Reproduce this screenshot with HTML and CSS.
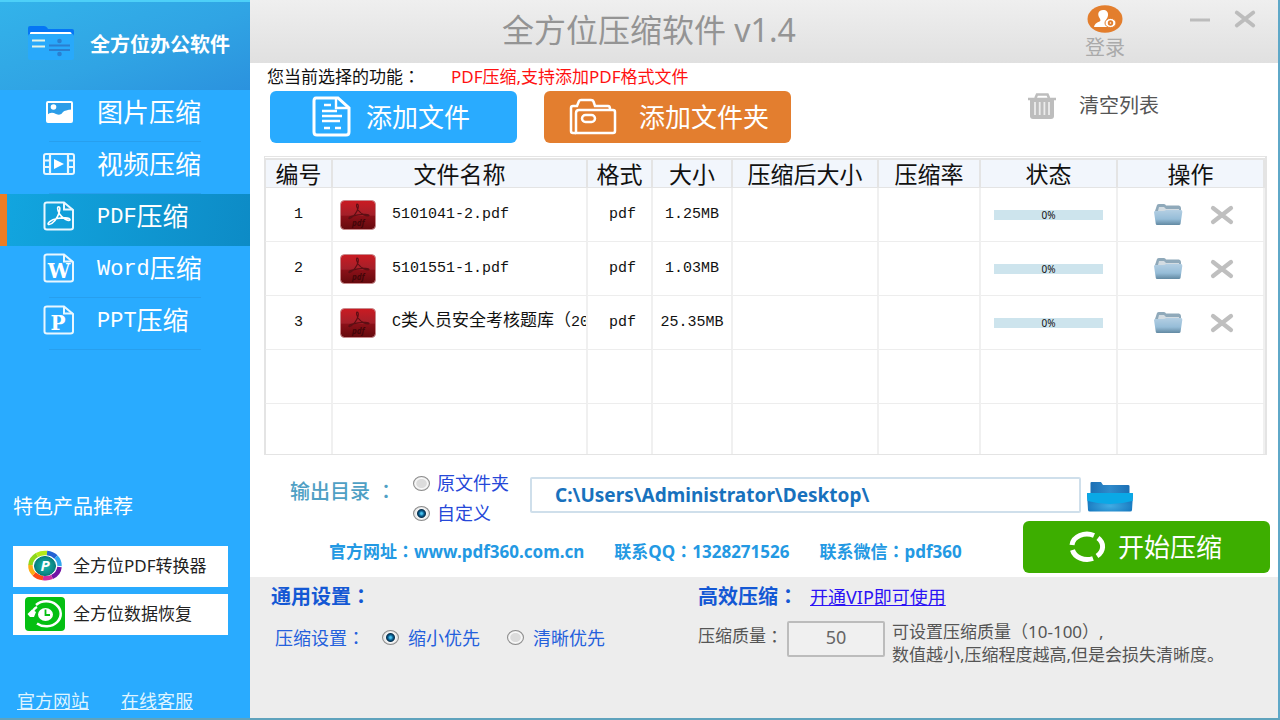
FILE: index.html
```html
<!DOCTYPE html>
<html lang="zh-CN">
<head>
<meta charset="utf-8">
<title>全方位压缩软件 v1.4</title>
<link rel="stylesheet" href="styles.css">
</head>
<body>
<svg class="sprite" aria-hidden="true">
  <defs>
    <linearGradient id="redFill" x1="0" y1="0" x2="0" y2="1">
      <stop offset="0" stop-color="#cb1b22"/><stop offset=".5" stop-color="#a3202a"/><stop offset=".55" stop-color="#8a1018"/><stop offset="1" stop-color="#650a0e"/>
    </linearGradient>
    <linearGradient id="folderFill" x1="0" y1="0" x2="0" y2="1">
      <stop offset="0" stop-color="#b4cfe3"/><stop offset=".6" stop-color="#96bdd8"/><stop offset="1" stop-color="#6289a2"/>
    </linearGradient>
    <linearGradient id="backFill" x1="0" y1="0" x2="1" y2="0">
      <stop offset="0" stop-color="#1c6fb4"/><stop offset=".5" stop-color="#2f8acb"/><stop offset="1" stop-color="#1c6fb4"/>
    </linearGradient>
    <radialGradient id="frontFill" cx=".5" cy=".7" r=".6">
      <stop offset="0" stop-color="#41ade4"/><stop offset="1" stop-color="#1272bb"/>
    </radialGradient>
    <radialGradient id="tealFill"><stop offset="0" stop-color="#19b8ae"/><stop offset="1" stop-color="#08807e"/></radialGradient>
  </defs>
  <symbol id="page" viewBox="0 0 32 30">
    <path d="M4 1.5H21L30 9V26.5Q30 28.5 27.500 28.500H4Q1.500 28.500 1.500 26.500V3.500Q1.500 1.500 4 1.500Z" fill="none" stroke="#e9f7ff" stroke-width="2"/>
    <path d="M21 2V8.500H29.500" fill="none" stroke="#e9f7ff" stroke-width="2"/>
  </symbol>
  <symbol id="acrobat" viewBox="0 0 24 20">
    <path d="M11 1C13.500 0 13 4 12 7C10.500 12 6 18 2 18.500C-1 18 4 13.500 10 12.500C15 11.500 23 11.500 23 13.800C22 16 15 12 12.500 8C11 5 10 2 11 1Z" fill="none" stroke="currentColor" stroke-width="1.600"/>
  </symbol>
  <symbol id="pdfFile" viewBox="0 0 36 30">
    <rect x=".5" y=".5" width="35" height="29" rx="4" fill="url(#redFill)" stroke="#c98a8d"/>
    <path d="M17 4C19 4 18.500 8 17 11C15 15 11 19 9 18.500C8 17 13 15.500 18 14.800C23 14 29 14 29 15.500C27 17 21 14 18.500 10.500C17 8 16 5 17 4Z" fill="none" stroke="#5d0f14" stroke-width="1.200"/>
  </symbol>
  <symbol id="folder" viewBox="0 0 30 23">
    <path d="M2 8L4 2Q4.500 1 6 1H11Q12.500 1 13 2.500H26Q28 3 28 5V9H2Z" fill="#8fa9ba"/>
    <path d="M5 8L6 4H11L13 6H26V9H5Z" fill="#d3dce2"/>
    <path d="M1 9Q1 8 2.500 8H10Q12 8 13 7H28Q29.500 7 29.300 9L27.500 21Q27.300 22 26 22H4Q3 22 2.800 21Z" fill="url(#folderFill)"/>
  </symbol>
  <symbol id="cross" viewBox="0 0 24 20">
    <path d="M3 3L21 17M21 3L3 17" stroke="currentColor" stroke-width="4.200" stroke-linecap="round"/>
  </symbol>
</svg>

<div class="window">
  <aside class="sidebar">
    <header class="brand">
      <svg width="46" height="36" viewBox="0 0 46 36" aria-hidden="true">
        <path d="M0 3Q0 1 2 1H16Q18 1 19 2.500L20 4H44Q46 4 46 6V14H0Z" fill="#0576f5"/>
        <path d="M2 8Q2 7 3.500 7H42Q43.500 7 43.500 8.500V14H2Z" fill="#fff"/>
        <rect y="9" width="46" height="26" rx="2" fill="#28a9fb"/>
        <path d="M4 15.500H17M4 21.500H17" stroke="#e3f3e6" stroke-width="2"/>
        <path d="M21 20.500H42M21 25H42" stroke="#2a7fd0" stroke-width="2"/>
        <circle cx="31.500" cy="16" r="2.300" fill="#2a7fd0"/><circle cx="31.500" cy="29" r="2.300" fill="#2a7fd0"/>
      </svg>
      <strong>全方位办公软件</strong>
    </header>
    <nav class="menu">
      <button type="button"><span class="ico"><svg width="27" height="22" viewBox="0 0 27 22"><rect x="1" y="1" width="25" height="20" rx="1" fill="#2b9de8" stroke="#fff" stroke-width="2"/><circle cx="7.500" cy="6" r="2.800" fill="#fff"/><path d="M1 14Q5 10 10 13Q15 15 17 11Q19 9 26 8.500V21H1Z" fill="#fff"/></svg></span>图片压缩</button>
      <button type="button"><span class="ico"><svg width="32" height="22" viewBox="0 0 32 22"><rect x="1" y="1" width="30" height="20" rx="2" fill="none" stroke="#e9f7ff" stroke-width="2"/><path d="M7 1V21M25 1V21M1 7.500H7M1 14H7M25 7.500H31M25 14H31" stroke="#e9f7ff" stroke-width="2.200"/><path d="M11 6V16L21 11Z" fill="#fff"/></svg></span>视频压缩</button>
      <button type="button" class="active" aria-current="page"><span class="ico"><svg width="32" height="30" viewBox="0 0 32 30"><use href="#page"/><use href="#acrobat" x="4" y="5" width="24" height="20"/></svg></span><span class="latin">PDF</span>压缩</button>
      <button type="button"><span class="ico"><svg width="32" height="30" viewBox="0 0 32 30"><use href="#page"/><text x="16" y="25" class="letter">W</text></svg></span><span class="latin">Word</span>压缩</button>
      <button type="button"><span class="ico"><svg width="32" height="30" viewBox="0 0 32 30"><use href="#page"/><text x="15" y="25" class="letter">P</text></svg></span><span class="latin">PPT</span>压缩</button>
    </nav>
    <section class="promo">
      <h2>特色产品推荐</h2>
      <button type="button">
        <svg width="40" height="34" viewBox="0 0 40 34" aria-hidden="true">
          <g fill="none" stroke-width="4.500">
            <path d="M5.500 16A14.500 12.500 0 0 1 12 6" stroke="#8fd81c"/>
            <path d="M12 6A14.500 12.500 0 0 1 22 4" stroke="#b5ea18"/>
            <path d="M22 4A14.500 12.500 0 0 1 31 8" stroke="#2462d4"/>
            <path d="M31 8A14.500 12.500 0 0 1 34.500 17" stroke="#30a5ed"/>
            <path d="M34.500 18A14.500 12.500 0 0 1 27 28" stroke="#7115a5"/>
            <path d="M27 28A14.500 12.500 0 0 1 18 29" stroke="#d12fa0"/>
            <path d="M18 29A14.500 12.500 0 0 1 9 25" stroke="#ff4b15"/>
            <path d="M9 25A14.500 12.500 0 0 1 5.500 16" stroke="#ffac14"/>
          </g>
          <ellipse cx="20" cy="17" rx="10.500" ry="9.500" fill="url(#tealFill)" stroke="#077" />
          <text x="20" y="22" class="badge-letter">P</text>
        </svg>
        全方位PDF转换器
      </button>
      <button type="button">
        <svg width="40" height="34" viewBox="0 0 40 34" aria-hidden="true">
          <rect width="40" height="34" rx="4" fill="#05bf12"/>
          <path d="M11 8A14.500 12.500 0 1 1 12 26.500" fill="none" stroke="#fff" stroke-width="2.500"/>
          <path d="M7 17Q8 12 12 10" fill="none" stroke="#fff" stroke-width="2.500"/>
          <path d="M2.500 17L7 12.500L11 15L9 20H5Z" fill="#fff"/>
          <ellipse cx="20.500" cy="17.500" rx="7.500" ry="6.500" fill="#fff"/>
          <path d="M20.500 12.500V18H25" fill="none" stroke="#05bf12" stroke-width="1.800"/>
        </svg>
        全方位数据恢复
      </button>
    </section>
    <footer class="side-links"><a href="#">官方网站</a><a href="#">在线客服</a></footer>
  </aside>

  <main class="main">
    <header class="titlebar">
      <h1>全方位压缩软件 v1.4</h1>
      <button type="button" class="login">
        <svg width="36" height="28" viewBox="0 0 36 28" aria-hidden="true">
          <ellipse cx="18" cy="14" rx="17.500" ry="13.800" fill="#e37e2d"/>
          <path d="M16 5C19.500 5 21.500 7 21 10.500C20.700 13 19 14 19 15.500C19.500 17 20 17 20 19Q20 21 21.500 22H7Q7.500 18 12.500 16.500C14 16 13.500 14.500 12.500 13C10 9 11.500 5 16 5Z" fill="#fff"/>
          <ellipse cx="23.500" cy="18" rx="5.500" ry="4.600" fill="#fff" stroke="#e37e2d"/>
          <circle cx="23.500" cy="18" r="2.700" fill="#e37e2d"/><circle cx="23.500" cy="18" r=".8" fill="#fff"/>
        </svg>
        登录
      </button>
      <div class="controls">
        <button type="button" aria-label="最小化"><svg width="20" height="16" viewBox="0 0 20 16"><path d="M0 9H20" stroke="#bcbcbc" stroke-width="3"/></svg></button>
        <button type="button" aria-label="关闭"><svg width="22" height="20"><use href="#cross"/></svg></button>
      </div>
    </header>

    <div class="content">
      <p class="current">您当前选择的功能<span class="colon" lang="zh-TW">：</span><span class="hint">PDF压缩,支持添加PDF格式文件</span></p>
      <div class="toolbar">
        <button type="button" class="action add-file">
          <svg width="40" height="42" viewBox="0 0 40 42" aria-hidden="true"><g fill="none" stroke="#fff" stroke-width="2.400"><path d="M4 2H26L37 12V36Q37 39 34 39H5Q2 39 2 36V5Q2 2 4 2Z" stroke-width="3"/><path d="M24 3V12H36M12 9H19M10 15H25M10 20H30M10 25H28M12 32H18M23 32H29"/></g></svg>
          添加文件
        </button>
        <button type="button" class="action add-folder">
          <svg width="48" height="38" viewBox="0 0 48 38" aria-hidden="true"><g fill="none" stroke="#fff" stroke-width="2.500"><path d="M7 35H4Q2 35 2 33V10Q2 8 4 8H8L10 3Q10.500 2 12 2H22Q24 2 24.500 3.500L26 8H39Q41 8 41 11"/><path d="M10 12H44Q46 12 46 14V33Q46 35 44 35H7V15Q7 12 10 12Z"/><rect x="13" y="17" width="13" height="7" rx="3.500"/></g></svg>
          添加文件夹
        </button>
        <button type="button" class="clear">
          <svg width="30" height="26" viewBox="0 0 30 26" aria-hidden="true"><path d="M1 6H29M8.500 5L10 1.500H20.500L22 5" fill="none" stroke="#bdbdbd" stroke-width="2.600"/><path d="M3 6H27V23Q27 26 24 26H6Q3 26 3 23Z" fill="#bdbdbd"/><path d="M8 9V22M12.700 9V22M17.400 9V22M22 9V22" stroke="#ececec" stroke-width="1.800"/></svg>
          清空列表
        </button>
      </div>

      <div class="table-frame">
        <table>
          <colgroup><col class="c-no"><col><col class="c-fmt"><col class="c-size"><col class="c-after"><col class="c-rate"><col class="c-state"><col class="c-op"></colgroup>
          <thead><tr><th>编号</th><th>文件名称</th><th>格式</th><th>大小</th><th>压缩后大小</th><th>压缩率</th><th>状态</th><th>操作</th></tr></thead>
          <tbody>
            <tr><td>1</td><td><div class="file"><svg width="36" height="30"><use href="#pdfFile"/><text x="12" y="26" class="file-tag">pdf</text></svg>5101041-2.pdf</div></td><td class="fmt">pdf</td><td>1.25MB</td><td></td><td></td><td><div class="bar">0%</div></td><td><div class="ops"><button type="button" aria-label="打开"><svg width="30" height="23"><use href="#folder"/></svg></button><button type="button" aria-label="删除"><svg width="26" height="20"><use href="#cross"/></svg></button></div></td></tr>
            <tr><td>2</td><td><div class="file"><svg width="36" height="30"><use href="#pdfFile"/><text x="12" y="26" class="file-tag">pdf</text></svg>5101551-1.pdf</div></td><td class="fmt">pdf</td><td>1.03MB</td><td></td><td></td><td><div class="bar">0%</div></td><td><div class="ops"><button type="button" aria-label="打开"><svg width="30" height="23"><use href="#folder"/></svg></button><button type="button" aria-label="删除"><svg width="26" height="20"><use href="#cross"/></svg></button></div></td></tr>
            <tr><td>3</td><td><div class="file"><svg width="36" height="30"><use href="#pdfFile"/><text x="12" y="26" class="file-tag">pdf</text></svg><span>C<span class="han">类人员安全考核题库（</span>20</span></div></td><td class="fmt">pdf</td><td>25.35MB</td><td></td><td></td><td><div class="bar">0%</div></td><td><div class="ops"><button type="button" aria-label="打开"><svg width="30" height="23"><use href="#folder"/></svg></button><button type="button" aria-label="删除"><svg width="26" height="20"><use href="#cross"/></svg></button></div></td></tr>
            <tr><td></td><td></td><td></td><td></td><td></td><td></td><td></td><td></td></tr>
            <tr class="last"><td></td><td></td><td></td><td></td><td></td><td></td><td></td><td></td></tr>
          </tbody>
        </table>
      </div>

      <div class="output">
        <span class="output-label" id="outLabel">输出目录<span class="colon" lang="zh-TW">：</span></span>
        <div class="choices" role="radiogroup" aria-labelledby="outLabel">
          <label><input type="radio" name="out">原文件夹</label>
          <label><input type="radio" name="out" checked>自定义</label>
        </div>
        <input class="path" type="text" aria-label="输出目录" value="C:\Users\Administrator\Desktop\">
        <button type="button" class="browse" aria-label="浏览">
          <svg width="46" height="30" viewBox="0 0 46 30"><path d="M3.500 1Q3.500 0 4.500 0H14L16 3H41Q42.500 3 42.500 4V13H3.500Z" fill="url(#backFill)"/><path d="M0 11.500Q0 11 1 11H45Q46 11 46 12L45 28Q45 29.500 43 29.500H3Q1 29.500 1 28Z" fill="url(#frontFill)"/><path d="M0 11.500Q0 11 1 11H45Q46 11 46 12L45.500 19Q23 25 .500 19Z" fill="#0aa8e6"/></svg>
        </button>
      </div>
      <div class="start-row">
        <div class="contacts"><span>官方网址<span class="colon" lang="zh-TW">：</span>www.pdf360.com.cn</span><span>联系QQ<span class="colon" lang="zh-TW">：</span>1328271526</span><span>联系微信<span class="colon" lang="zh-TW">：</span>pdf360</span></div>
        <button type="button" class="action start">
          <svg width="38" height="32" viewBox="0 0 38 32" aria-hidden="true"><g fill="none" stroke="#fff" stroke-width="5"><path d="M4 14A15 12 0 0 1 26 4.500"/><path d="M30 7A15 12 0 0 1 29 25"/><path d="M25 27.500A15 12 0 0 1 4.500 19"/></g></svg>
          开始压缩
        </button>
      </div>
    </div>

    <footer class="settings">
      <section class="general">
        <h2>通用设置<span class="colon" lang="zh-TW">：</span></h2>
        <div class="line">
          <span>压缩设置<span class="colon" lang="zh-TW">：</span></span>
          <label><input type="radio" name="mode" checked>缩小优先</label>
          <label><input type="radio" name="mode">清晰优先</label>
        </div>
      </section>
      <section class="vip">
        <h2>高效压缩<span class="colon" lang="zh-TW">：</span><a href="#">开通VIP即可使用</a></h2>
        <div class="quality">
          <label for="q">压缩质量<span class="colon" lang="zh-TW">：</span></label>
          <input id="q" type="text" value="50">
          <p>可设置压缩质量<span class="colon" lang="zh-TW">（</span>10-100<span class="colon" lang="zh-TW">）</span>,<br>数值越小,压缩程度越高,但是会损失清晰度。</p>
        </div>
      </section>
    </footer>
  </main>
</div>
</body>
</html>
```
FILE: styles.css
```css
* { box-sizing: border-box; }
body, h1, h2, p { margin: 0; }
body, button, input {
  font-family: "Noto Sans", "Noto Sans CJK SC", sans-serif;
  font-size: 18px;
  line-height: 20px;
}
button { border: 0; padding: 0; background: none; color: inherit; cursor: pointer; }
svg { display: block; flex: none; }
.sprite { position: absolute; width: 0; height: 0; }
.colon { font-family: "Noto Sans CJK TC", sans-serif; }

.window {
  display: flex;
  min-height: 100vh;
  border-right: 2px solid #5fa8c8;
  border-bottom: 2px solid #5fa3bd;
  background: #fff;
}

/* sidebar */
.sidebar {
  flex: 0 0 250px;
  display: flex;
  flex-direction: column;
  background: #29abff;
  color: #fff;
}
.brand {
  display: flex;
  align-items: center;
  gap: 16px;
  height: 90px;
  padding: 0 0 6px 28px;
  border-top: 2px solid #4dd0f8;
  background: linear-gradient(160deg, #33b3ea, #30a4e4 55%, #2b92de);
}
.brand strong { padding-top: 4px; font-size: 20px; white-space: nowrap; }
.menu button {
  display: flex;
  align-items: center;
  width: 100%;
  height: 52px;
  padding: 0 0 8px 34px;
  border-left: 7px solid transparent;
  background: linear-gradient(#279fee, #279fee) 42px 100% / 152px 1px no-repeat;
  font-size: 26px;
  line-height: 32px;
}
.menu .active { border-left-color: #ec7d23; background: linear-gradient(100deg, #12a5df, #0d8bc6); }
.menu .ico { width: 36px; margin-right: 20px; display: flex; justify-content: center; flex: none; }
.latin { padding-top: 4px; font-family: "Liberation Mono", monospace; font-size: 22px; }
.letter { font: bold 20px "DejaVu Serif", serif; fill: #fff; text-anchor: middle; }
.badge-letter { font: italic bold 15px "Noto Sans", sans-serif; fill: #fff; text-anchor: middle; }
.file-tag { font: italic bold 8px "Noto Sans", sans-serif; fill: #430609; }
.promo { margin-top: auto; padding: 0 22px 0 13px; display: flex; flex-direction: column; gap: 7px; }
.promo h2 { font-size: 20px; font-weight: 400; margin-bottom: 22px; }
.promo button {
  display: flex;
  align-items: center;
  gap: 8px;
  height: 41px;
  padding: 0 0 2px 12px;
  background: #fff;
  color: #222;
  font-size: 17px;
  white-space: nowrap;
}
.side-links { display: flex; gap: 32px; padding: 56px 0 7px 17px; }
.side-links a { color: #dff4ff; }

/* title bar */
.main { flex: 1; min-width: 0; display: flex; flex-direction: column; }
.titlebar {
  display: flex;
  align-items: flex-start;
  height: 63px;
  padding: 0 22px 0 252px;
  background: linear-gradient(#efefef, #e0e0e0);
}
.titlebar h1 { font-size: 32px; line-height: 60px; font-weight: 400; color: #949494; margin-right: auto; white-space: nowrap; }
.login { display: flex; flex-direction: column; align-items: center; gap: 5px; padding-top: 5px; color: #aaa; font-size: 20px; }
.controls { display: flex; align-items: center; gap: 24px; margin-left: 65px; padding-top: 9px; color: #bcbcbc; }

/* file list */
.content { flex: 1; padding: 0 8px 4px 14px; }
.current { padding: 3px 0 4px 3px; font-size: 17px; color: #111; }
.hint { margin-left: 31px; color: #f11; }
.toolbar { display: flex; align-items: center; gap: 27px; padding-left: 6px; }
.action {
  display: flex;
  align-items: center;
  width: 247px;
  height: 52px;
  border-radius: 6px;
  color: #fff;
  font-size: 26px;
  line-height: 32px;
  white-space: nowrap;
}
.add-file { background: #29abff; padding-left: 42px; gap: 14px; }
.add-folder { background: #e37e2f; padding-left: 25px; gap: 22px; }
.clear { display: flex; align-items: center; gap: 22px; margin: 0 111px 22px auto; font-size: 20px; color: #555; }
.table-frame { margin: 13px 3px 0 0; border: 1px solid #e4e4e4; border-width: 1px 2px 1px 1px; padding-top: 1px; }
table { width: 100%; table-layout: fixed; border-collapse: separate; border-spacing: 0; }
.c-no { width: 68px; }
.c-fmt { width: 65px; }
.c-size { width: 80px; }
.c-after { width: 146px; }
.c-rate { width: 102px; }
.c-state { width: 137px; }
.c-op { width: 147px; }
th {
  height: 30px;
  padding: 0;
  border: solid #e4e4e4;
  border-width: 2px 2px 1px 0;
  background: #f2f6fc;
  font-size: 23px;
  font-weight: 400;
  line-height: 26px;
  color: #111;
  white-space: nowrap;
}
td {
  height: 54px;
  padding: 0;
  border-right: 2px solid #f0f0f0;
  border-bottom: 1px solid #ededed;
  font: 15px/22px "Liberation Mono", "Noto Sans CJK SC", monospace;
  color: #111;
  text-align: center;
}
th:first-child, td:first-child { border-left: 1px solid #e4e4e4; }
.last td { height: 50px; border-bottom: 0; }
td.fmt { padding-left: 6px; }
.file { display: flex; align-items: center; gap: 16px; padding-left: 7px; overflow: hidden; white-space: nowrap; }
.han { font-size: 17px; }
.bar { width: 109px; height: 10px; margin: 0 auto; background: #cde4ed; font: 10px/10px "Noto Sans", sans-serif; }
.ops { display: flex; align-items: center; justify-content: center; gap: 26px; padding-left: 6px; color: #bfbfbf; }

/* output folder */
input[type="radio"] {
  appearance: none;
  flex: none;
  width: 17px;
  height: 15px;
  margin: 0;
  border: 1px solid #8c8c8c;
  border-radius: 50%;
  background: radial-gradient(#dcdcdc 45%, #fafafa 55%, #c4c4c4);
}
input[type="radio"]:checked {
  background: radial-gradient(circle at 50% 50%, #4ac4f0 0 8%, #0b5f92 25%, #06304e 40%, #f6f6f6 50%, #c8c8c8);
}
label { display: flex; align-items: center; white-space: nowrap; }
.output { display: flex; align-items: flex-start; padding: 20px 0 0 26px; }
.output-label { width: 123px; padding-top: 6px; font-size: 20px; font-weight: 500; color: #4fa0c4; white-space: nowrap; }
.output-label .colon { margin-left: 6px; }
.choices { display: flex; flex-direction: column; gap: 14px; width: 117px; color: #2648d8; }
.choices label { gap: 7px; line-height: 16px; height: 16px; }
.path {
  flex: 1;
  min-width: 0;
  height: 36px;
  margin: 2px 6px 0 0;
  padding: 0 23px;
  border: 2px solid #cfdfeb;
  border-radius: 2px;
  background: #fff;
  color: #1871bd;
  font-size: 19px;
  font-weight: 700;
}
.browse { margin: 7px 137px 0 0; }
.start-row { display: flex; align-items: center; justify-content: space-between; padding-left: 65px; }
.contacts { display: flex; gap: 30px; padding-top: 8px; font-size: 17px; font-weight: 700; color: #2399e3; white-space: nowrap; }
.start { background: #3dae00; padding-left: 45px; gap: 12px; }

/* settings */
.settings { display: flex; height: 141px; padding: 9px 20px 0 21px; background: #ededed; }
.settings h2 { font-size: 20px; font-weight: 700; color: #1458d4; white-space: nowrap; }
.settings h2 a { margin-left: 12px; font-size: 18px; font-weight: 400; color: #2a12f5; }
.general { flex: 0 0 427px; }
.line { display: flex; padding: 20px 0 0 4px; color: #2460dc; white-space: nowrap; }
.line span + label { margin-left: 17px; }
.line label { gap: 9px; }
.line label + label { margin-left: 27px; }
.quality { display: flex; align-items: flex-start; padding-top: 12px; font-size: 17px; color: #555; }
.quality label { line-height: 34px; }
.quality input {
  width: 98px;
  height: 36px;
  margin: 2px 7px 0 4px;
  padding: 0 0 4px;
  border: 2px solid #bcbcbc;
  border-radius: 2px;
  background: #f0f0f0;
  color: #666;
  text-align: center;
}
.quality p { line-height: 23px; white-space: nowrap; }
```
